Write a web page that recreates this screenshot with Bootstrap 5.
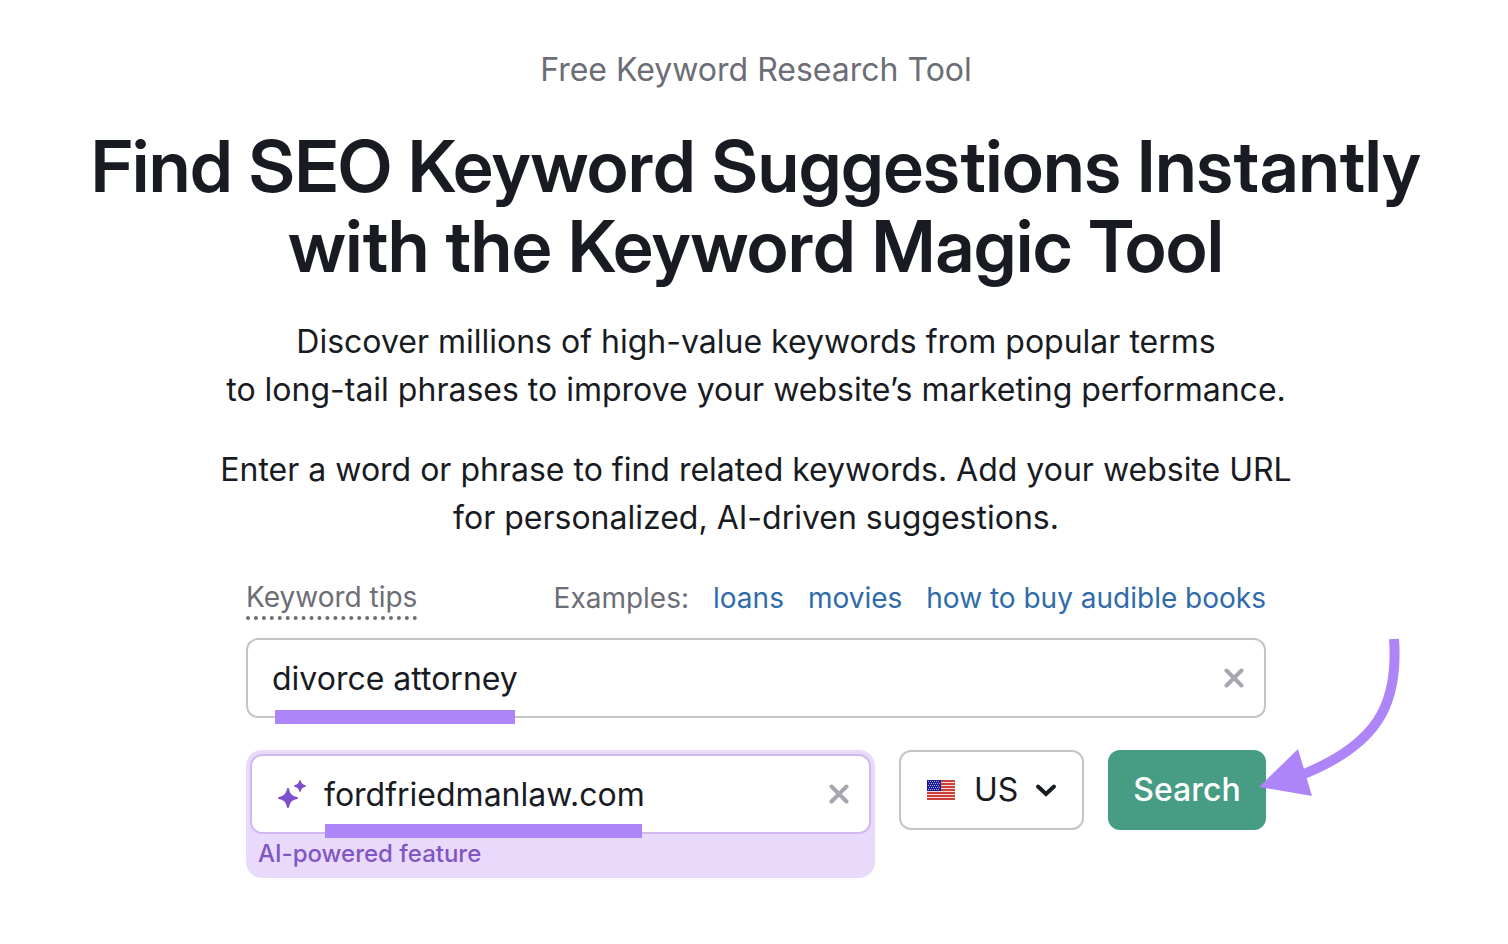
<!DOCTYPE html>
<html lang="en">
<head>
<meta charset="utf-8">
<meta name="viewport" content="width=device-width, initial-scale=1">
<title>Keyword Magic Tool</title>
<link href="https://cdn.jsdelivr.net/npm/bootstrap@5.3.0/dist/css/bootstrap.min.css" rel="stylesheet">
<style>
body{font-family:Inter,sans-serif;color:#191b23;background:#fff}
.hero{padding:46px 8px 40px 12px}
.eyebrow{font-size:32px;line-height:48px;color:#6c6d75;margin-bottom:32px}
.hero-title{font-family:"Inter Display",Inter,sans-serif;font-size:72px;line-height:80px;font-weight:600;margin-bottom:32px}
.copy{font-size:32px;line-height:48px;margin-bottom:32px}
.tool{max-width:1020px}
.hints{font-size:28px;line-height:40px;color:#6c6d75;margin:36px 0 18px}
.hints a{color:#2f6bab;text-decoration:none}
.tips{color:inherit;font-size:28px;line-height:38px;border:0;border-bottom:4px dotted #6c6d75;background:none;padding:0}
.field{height:80px;border:2px solid #c4c5c9;border-radius:12px;background:#fff;padding:0 20px 0 24px}
.field input{border:0;outline:0;background:none;padding:2px 0 0;font-size:32px;line-height:48px;color:#191b23;min-width:0}
.clear{border:0;background:none;padding:0;line-height:0}
.inputs{gap:32px}
.controls{gap:24px}
.ai-box{background:#e9dafc;border-radius:16px;padding:4px}
.ai-box .field{border-color:#d3b8f0}
.ai-note{font-size:24px;line-height:40px;font-weight:500;color:#8056c2;padding-left:8px}
.marker{height:14px;background:#ae85f8;pointer-events:none}
.marker-keyword{left:27px;top:70px;width:240px}
.marker-site{left:79px;top:74px;width:317px}
.country{width:185px}
.country select{appearance:none;width:100%;height:80px;padding:0 0 0 73px;border:2px solid #c4c5c9;border-radius:12px;background:#fff;font-size:32px;color:#191b23}
.flag{left:28px}
.chevron{right:27px}
.go{width:158px;height:80px;border:0;border-radius:12px;padding:0;font-size:32px;font-weight:500;background:#479d84;color:#fff}
.go:hover{background:#3e8c75;color:#fff}
.arrow{right:-136px;top:0;pointer-events:none}
</style>
</head>
<body>
<main class="hero text-center">
<p class="eyebrow">Free Keyword Research Tool</p>
<h1 class="hero-title">Find SEO Keyword Suggestions Instantly<br>with the Keyword Magic Tool</h1>
<p class="copy">Discover millions of high-value keywords from popular terms<br>to long-tail phrases to improve your website’s marketing performance.</p>
<p class="copy">Enter a word or phrase to find related keywords. Add your website URL<br>for personalized, AI-driven suggestions.</p>
<div class="tool mx-auto">
  <div class="hints d-flex justify-content-between align-items-start">
    <button type="button" class="tips">Keyword tips</button>
    <div class="d-flex gap-4"><span>Examples:</span><a href="#">loans</a><a href="#">movies</a><a href="#">how to buy audible books</a></div>
  </div>
  <form class="inputs position-relative d-flex flex-column">
    <div class="field position-relative d-flex align-items-center">
      <input class="flex-grow-1" type="text" value="divorce attorney" aria-label="Keyword">
      <button type="button" class="clear" aria-label="Clear keyword"><svg width="20" height="20" viewBox="0 0 20 20"><path d="M2.5 2.5l15 15M17.5 2.5l-15 15" stroke="#a5a6af" stroke-width="4" stroke-linecap="round"/></svg></button>
      <span class="marker marker-keyword position-absolute"></span>
    </div>
    <div class="controls d-flex align-items-start">
      <div class="ai-box position-relative flex-grow-1 text-start">
        <div class="field d-flex align-items-center">
          <svg class="flex-shrink-0 me-3" width="32" height="32" viewBox="0 0 32 32" fill="#7e4fcb"><path d="M12 10q.8 0 1.100 1c1.100 5 2.900 6.800 7.900 7.900q1 .3 1 1.100t-1 1.100c-5 1.100-6.800 2.900-7.900 7.900q-.3 1-1.100 1t-1.100-1c-1.100-5-2.900-6.800-7.900-7.900q-1-.3-1-1.100t1-1.100c5-1.100 6.800-2.900 7.900-7.900q.3-1 1.100-1z"/><path d="M24 2q.6 0 .8.700c.7 2.600 1.900 3.800 4.500 4.500q.7.200.7.800t-.7.800c-2.600.7-3.800 1.900-4.500 4.500q-.2.700-.8.700t-.8-.7c-.7-2.600-1.900-3.800-4.500-4.500q-.7-.2-.7-.8t.7-.8c2.600-.7 3.800-1.900 4.500-4.500q.2-.7.800-.7z"/></svg>
          <input class="flex-grow-1" type="text" value="fordfriedmanlaw.com" aria-label="Website" aria-describedby="ai-note">
          <button type="button" class="clear" aria-label="Clear website"><svg width="20" height="20" viewBox="0 0 20 20"><path d="M2.5 2.5l15 15M17.5 2.5l-15 15" stroke="#a5a6af" stroke-width="4" stroke-linecap="round"/></svg></button>
        </div>
        <div class="ai-note" id="ai-note">AI-powered feature</div>
        <span class="marker marker-site position-absolute"></span>
      </div>
      <div class="country position-relative d-flex align-items-center flex-shrink-0">
        <select aria-label="Country"><option>US</option></select>
        <svg class="flag position-absolute pe-none" width="28" height="20" viewBox="0 0 28 20"><path fill="#f3dcda" d="M0 0h28v20H0z"/><path d="M0 1h28M0 4h28M0 7h28M0 10h28M0 13h28M0 16h28M0 19h28" stroke="#cb4038" stroke-width="2"/><path fill="#1b1b8e" d="M0 0h14v11H0z"/><path d="M1 1.500h12M2 3.500h11M1 5.500h12M2 7.500h11M1 9.500h12" stroke="#a9a9ef" stroke-dasharray="1 1"/></svg>
        <svg class="chevron position-absolute pe-none" width="22" height="14" viewBox="0 0 22 14"><path d="M3 3.500l8 7.500 8-7.500" fill="none" stroke="#191b23" stroke-width="4" stroke-linecap="round"/></svg>
      </div>
      <button type="submit" class="btn go flex-shrink-0">Search</button>
    </div>
    <svg class="arrow position-absolute" width="144" height="160" viewBox="0 0 144 160"><path d="M136 1C141 70 116 107 46 136" fill="none" stroke="#ae85f8" stroke-width="10"/><path fill="#ae85f8" d="M1 149l39-38 14 47z"/></svg>
  </form>
</div>
</main>
<script src="https://cdn.jsdelivr.net/npm/bootstrap@5.3.0/dist/js/bootstrap.bundle.min.js"></script>
</body>
</html>
